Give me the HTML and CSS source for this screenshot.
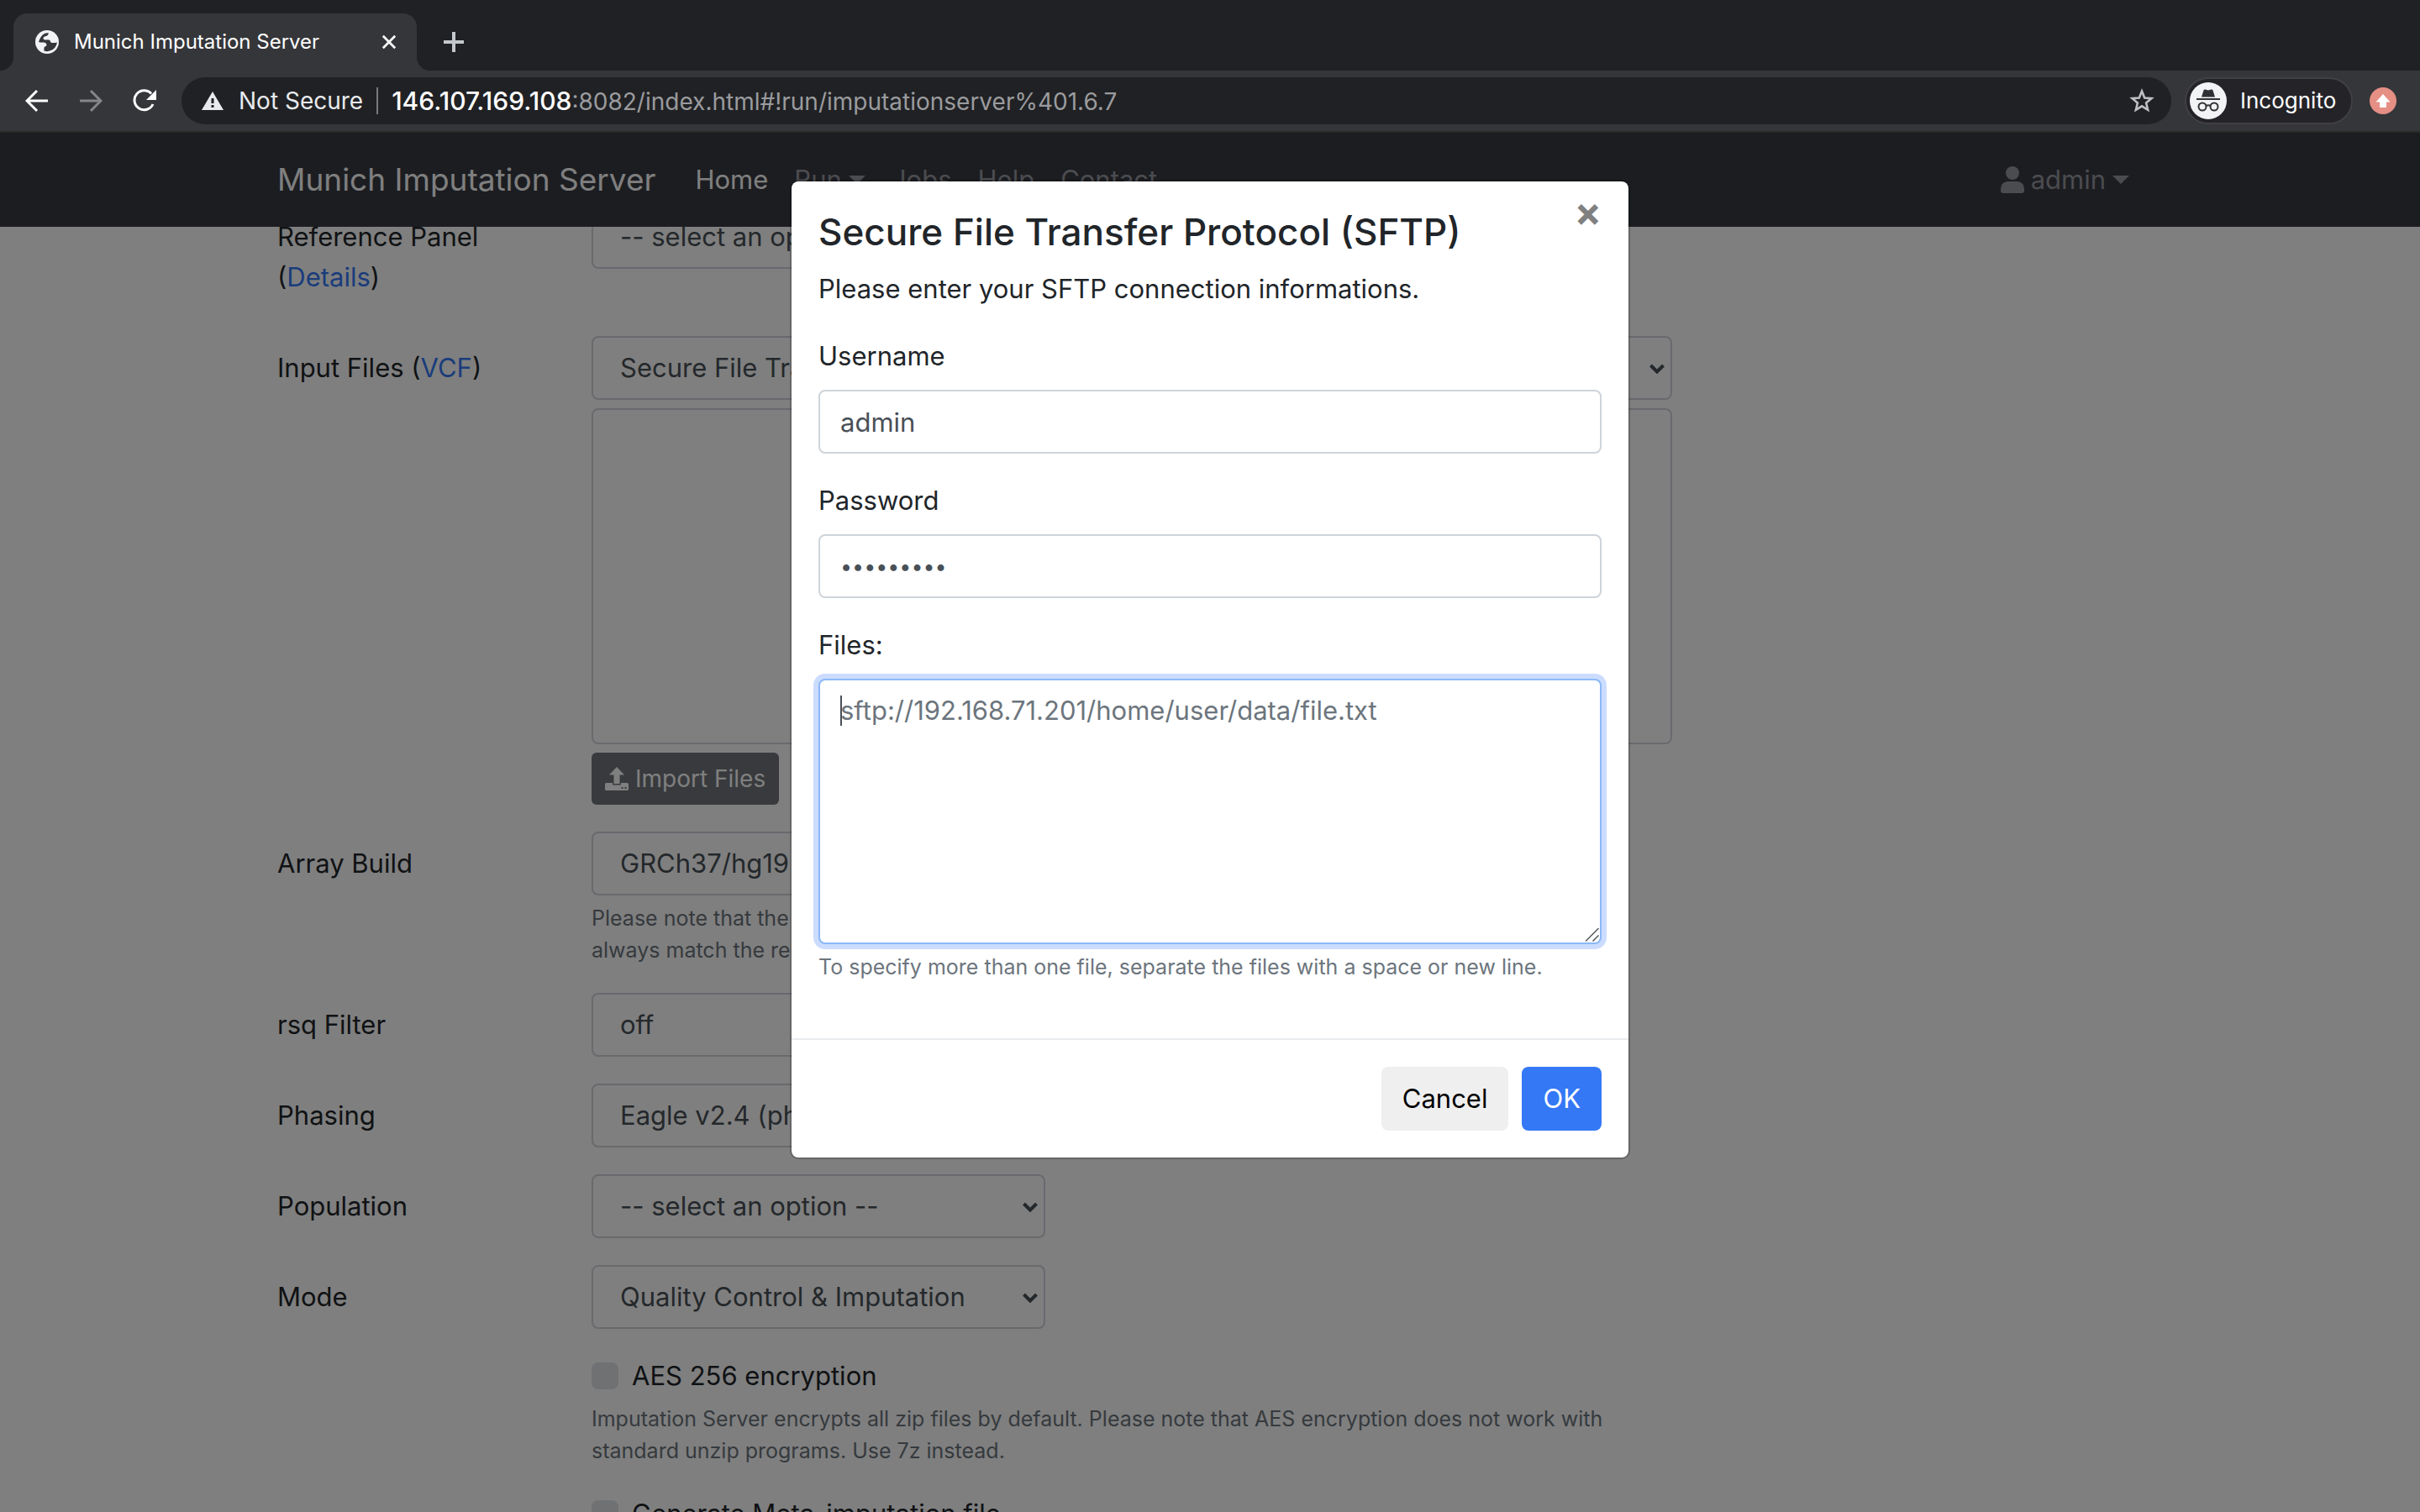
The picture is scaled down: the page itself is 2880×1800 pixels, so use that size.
FILE: index.html
```html
<!DOCTYPE html>
<html lang="en">
<head>
<meta charset="utf-8">
<title>Munich Imputation Server</title>
<link rel="stylesheet" href="styles.css">
</head>
<body>
<header class="browser">
  <div class="tabs">
    <div class="tab">
      <svg class="tab-icon" viewBox="0 0 28 28"><circle cx="14" cy="14" r="14" fill="#f1f3f4"/><path d="M16 3.500c-5-1-9 2-12 10.500 1 .5 3 .5 6 .5q3 0 3.500 3 0 1.500-2 2-1.500.5-1 5 4 1.500 8-.5 6-2 7.500-9.500-3 .5-6 .5-2 0-2.500-3-2-1-4.500-.5-3.500 0-3.500-2 .5-2.500 3.500-2.500 2-.5 3-3.500z" fill="#35363a"/></svg>
      <span class="tab-title">Munich Imputation Server</span>
      <button class="bare tab-close" aria-label="Close tab"><svg width="18" height="18" viewBox="0 0 20 20"><path d="M2 2l16 16M18 2L2 18" stroke="#fff" stroke-width="3"/></svg></button>
    </div>
    <button class="bare tab-new" aria-label="New tab"><svg width="24" height="24" viewBox="0 0 24 24"><path d="M12 0v24M0 12h24" stroke="#c4c7cb" stroke-width="4"/></svg></button>
  </div>
  <div class="toolbar">
    <div class="tools">
      <button class="bare" aria-label="Back"><svg width="28" height="28" viewBox="0 0 28 28"><path d="M27 14H3M14 2L2 14l12 12" fill="none" stroke="#fff" stroke-width="3"/></svg></button>
      <button class="bare" aria-label="Forward"><svg width="28" height="28" viewBox="0 0 28 28"><path d="M1 14h24M14 2l12 12-12 12" fill="none" stroke="#85868a" stroke-width="3"/></svg></button>
      <button class="bare" aria-label="Reload"><svg width="28" height="28" viewBox="0 0 28 28"><path d="M24 18A11.500 11.500 0 1 1 22 5.500" fill="none" stroke="#fff" stroke-width="3"/><path d="M28 1v12H16z" fill="#fff"/></svg></button>
    </div>
    <div class="address">
      <svg width="26" height="22" viewBox="0 0 26 22"><path d="M13 0l13 22H0z" fill="#e8eaed"/><path d="M13 8v6M13 16v3" stroke="#202124" stroke-width="3"/></svg>
      <span class="insecure">Not Secure</span>
      <span class="url"><b>146.107.169.108</b>:8082/index.html#!run/imputationserver%401.6.7</span>
      <button class="bare" aria-label="Bookmark"><svg width="30" height="30" viewBox="0 0 30 30"><path d="M15 3.500l3.200 8 8.300.6-6.400 5.400 2 8.300L15 21.300l-7.100 4.500 2-8.300-6.400-5.400 8.300-.6z" fill="none" stroke="#bdbfc2" stroke-width="2.600"/></svg></button>
    </div>
    <div class="incognito">
      <svg width="44" height="44" viewBox="0 0 44 44"><circle cx="22" cy="22" r="22" fill="#f1f3f4"/><path d="M14 17.500l2.500-8q.5-1.500 2-1l3.500 1 3.500-1q1.500-.5 2 1l2.500 8zM8 19h28v2H8z" fill="#303134"/><g fill="none" stroke="#303134" stroke-width="2"><circle cx="15" cy="29" r="4.500"/><circle cx="29" cy="29" r="4.500"/><path d="M19.500 28q2.500-1.500 5 0"/></g></svg>
      <span>Incognito</span>
    </div>
    <svg width="32" height="32" viewBox="0 0 32 32"><circle cx="16" cy="16" r="16" fill="#e58f85"/><path d="M16 8l8.500 9.500H20V24h-8v-6.500H7.500z" fill="#fff"/></svg>
  </div>
</header>

<div class="page">
  <nav class="navbar">
    <div class="container nav-row">
      <a class="brand" href="#">Munich Imputation Server</a>
      <a class="nav-link active" href="#">Home</a>
      <a class="nav-link" href="#">Run<i class="caret"></i></a>
      <a class="nav-link" href="#">Jobs</a>
      <a class="nav-link" href="#">Help</a>
      <a class="nav-link" href="#">Contact</a>
      <a class="nav-link user" href="#"><svg width="28" height="32" viewBox="0 0 28 32"><circle cx="14" cy="8" r="8" fill="currentColor"/><path d="M8 18h12q8 1 8 9v2q0 3-3 3H3q-3 0-3-3v-2q0-8 8-9z" fill="currentColor"/></svg>admin<i class="caret"></i></a>
    </div>
  </nav>

  <main class="container form">
    <div class="row">
      <label class="label" for="panel">Reference Panel<br>(<a href="#">Details</a>)</label>
      <div class="field"><div class="select short"><select id="panel"><option>-- select an option --</option></select><svg class="chevron" viewBox="0 0 18 12"><path d="M1.500 2L9 9.500 16.500 2" fill="none" stroke="#495057" stroke-width="4"/></svg></div></div>
    </div>
    <div class="row">
      <label class="label" for="files-source">Input Files (<a href="#">VCF</a>)</label>
      <div class="field">
        <div class="select"><select id="files-source"><option>Secure File Transfer Protocol (SFTP)</option></select><svg class="chevron" viewBox="0 0 18 12"><path d="M1.500 2L9 9.500 16.500 2" fill="none" stroke="#495057" stroke-width="4"/></svg></div>
        <select class="file-list" multiple aria-label="Imported files"></select>
        <button class="import"><svg width="28" height="28" viewBox="0 0 28 28"><path d="M14 0l9 9.500h-5.500V20h-7V9.500H5z" fill="currentColor"/><path d="M1.500 19H9v2.500h10V19h7.500Q28 19 28 20.500v6q0 1.500-1.500 1.500h-25Q0 28 0 26.500v-6Q0 19 1.500 19zM19.500 24v2h2v-2zm4 0v2h2v-2z" fill="currentColor" fill-rule="evenodd"/></svg>Import Files</button>
      </div>
    </div>
    <div class="row">
      <label class="label" for="build">Array Build</label>
      <div class="field">
        <div class="select short"><select id="build"><option>GRCh37/hg19</option></select><svg class="chevron" viewBox="0 0 18 12"><path d="M1.500 2L9 9.500 16.500 2" fill="none" stroke="#495057" stroke-width="4"/></svg></div>
        <p class="help">Please note that the<br>always match the re</p>
      </div>
    </div>
    <div class="row">
      <label class="label" for="rsq">rsq Filter</label>
      <div class="field"><div class="select short"><select id="rsq"><option>off</option></select><svg class="chevron" viewBox="0 0 18 12"><path d="M1.500 2L9 9.500 16.500 2" fill="none" stroke="#495057" stroke-width="4"/></svg></div></div>
    </div>
    <div class="row">
      <label class="label" for="phasing">Phasing</label>
      <div class="field"><div class="select short"><select id="phasing"><option>Eagle v2.4 (phased)</option></select><svg class="chevron" viewBox="0 0 18 12"><path d="M1.500 2L9 9.500 16.500 2" fill="none" stroke="#495057" stroke-width="4"/></svg></div></div>
    </div>
    <div class="row">
      <label class="label" for="population">Population</label>
      <div class="field"><div class="select short"><select id="population"><option>-- select an option --</option></select><svg class="chevron" viewBox="0 0 18 12"><path d="M1.500 2L9 9.500 16.500 2" fill="none" stroke="#495057" stroke-width="4"/></svg></div></div>
    </div>
    <div class="row">
      <label class="label" for="mode">Mode</label>
      <div class="field"><div class="select short"><select id="mode"><option>Quality Control &amp; Imputation</option></select><svg class="chevron" viewBox="0 0 18 12"><path d="M1.500 2L9 9.500 16.500 2" fill="none" stroke="#495057" stroke-width="4"/></svg></div></div>
    </div>
    <div class="row">
      <div class="label"></div>
      <div class="field">
        <label class="check"><input type="checkbox">AES 256 encryption</label>
        <p class="help">Imputation Server encrypts all zip files by default. Please note that AES encryption does not work with<br>standard unzip programs. Use 7z instead.</p>
      </div>
    </div>
    <div class="row">
      <div class="label"></div>
      <div class="field"><label class="check"><input type="checkbox">Generate Meta-imputation file</label></div>
    </div>
  </main>

  <div class="backdrop">
    <div class="modal" role="dialog" aria-labelledby="modal-title">
      <form class="modal-body">
        <button type="button" class="bare modal-close" aria-label="Close">×</button>
        <h4 id="modal-title">Secure File Transfer Protocol (SFTP)</h4>
        <p class="intro">Please enter your SFTP connection informations.</p>
        <div class="group"><label for="username">Username</label><input class="control" id="username" type="text" value="admin"></div>
        <div class="group"><label for="password">Password</label><input class="control" id="password" type="password" value="secret123"></div>
        <div class="group">
          <label for="files">Files:</label>
          <div class="files-box">
            <textarea class="control focused" id="files" placeholder="sftp://192.168.71.201/home/user/data/file.txt"></textarea>
            <i class="text-cursor"></i>
            <svg class="grip" viewBox="0 0 16 16"><path d="M0 15.500L15.500 0M8.500 15.500l7-7" stroke="#55585b" stroke-width="1.500"/></svg>
          </div>
          <p class="help">To specify more than one file, separate the files with a space or new line.</p>
        </div>
      </form>
      <div class="modal-footer"><button class="btn">Cancel</button><button class="btn primary">OK</button></div>
    </div>
  </div>
</div>
</body>
</html>
```
FILE: styles.css
```css
* { box-sizing: border-box; }
body {
  margin: 0;
  height: 100vh;
  display: flex;
  flex-direction: column;
  overflow: hidden;
  font: 31px/48px Inter, "Liberation Sans", sans-serif;
  color: #212529;
}
button, input, select, textarea { font: inherit; }
svg { display: block; flex: none; }
a { color: #3478f6; text-decoration: none; }
h4, p { margin: 0; }
.bare { border: 0; padding: 0; background: none; display: flex; }

/* browser frame */
.browser { background: #202124; color: #fff; border-bottom: 2px solid #282a28; }
.tabs { height: 84px; padding: 16px 16px 0; display: flex; align-items: center; gap: 32px; }
.tab {
  position: relative;
  width: 480px;
  height: 68px;
  padding: 0 24px 0 26px;
  display: flex;
  align-items: center;
  gap: 18px;
  background: #35363a;
  border-radius: 16px 16px 0 0;
  font-size: 24px;
}
.tab::before, .tab::after {
  content: "";
  position: absolute;
  bottom: 0;
  width: 16px;
  height: 16px;
}
.tab::before { right: 100%; background: radial-gradient(circle at 0 0, #202124 16px, #35363a 16px); }
.tab::after { left: 100%; background: radial-gradient(circle at 100% 0, #202124 16px, #35363a 16px); }
.tab-icon { width: 28px; height: 28px; }
.tab-title { flex: 1; white-space: nowrap; }
.toolbar { height: 72px; padding: 8px 28px 8px 30px; display: flex; align-items: center; gap: 16px; background: #35363a; }
.tools { display: flex; gap: 36px; margin-right: 14px; }
.address {
  flex: 1;
  height: 56px;
  padding: 0 20px 0 24px;
  display: flex;
  align-items: center;
  background: #202124;
  border-radius: 28px;
  font-size: 28px;
}
.insecure { margin-left: 18px; padding-right: 16px; border-right: 2px solid #77797c; line-height: 32px; color: #e8eaed; }
.url { flex: 1; margin-left: 16px; color: #9a9b9e; }
.url b { font-size: 30px; font-weight: 500; color: #fff; }
.incognito {
  width: 200px;
  height: 56px;
  margin-right: 4px;
  padding-left: 4px;
  display: flex;
  align-items: center;
  gap: 16px;
  border: 2px solid #414045;
  border-radius: 28px;
  background: #242328;
  font-size: 26px;
}

/* page */
.page { position: relative; flex: 1; overflow: hidden; background: #fff; }
.container { max-width: 2280px; margin: 0 auto; padding: 0 30px; }
.navbar { position: relative; z-index: 1; background: #383a42; }
.nav-row { height: 112px; display: flex; align-items: center; gap: 31px; }
.brand { margin-right: 16px; font-size: 37px; color: #fff; }
.nav-link { display: flex; align-items: center; color: #9698a0; }
.nav-link.active { color: #fff; }
.user { margin: 0 16px 0 auto; gap: 8px; }
.caret { margin-left: 8px; border: solid transparent; border-width: 10px 10px 0; border-top-color: currentColor; }
.user .caret { margin-left: 0; }

.form { margin-top: -26px; }
.row { display: flex; margin-bottom: 32px; }
.label { width: 374px; flex: none; padding: 14px 0; }
.field { width: 1286px; }
.select { position: relative; }
.select.short { width: 540px; }
.select select {
  display: block;
  width: 100%;
  height: 76px;
  padding: 0 32px;
  appearance: none;
  border: 2px solid #d2d2dc;
  border-radius: 8px;
  background: #fff;
  color: #495057;
}
.chevron { position: absolute; right: 9px; top: 33px; width: 18px; height: 12px; }
.file-list { display: block; width: 100%; height: 400px; margin: 10px 0; border: 2px solid #d2d2dc; border-radius: 8px; background: #fff; }
.import {
  height: 62px;
  padding: 0 16px;
  display: flex;
  align-items: center;
  gap: 8px;
  border: 0;
  border-radius: 6px;
  background: #70757a;
  color: #fff;
  font-size: 28px;
}
.help { margin-top: 8px; font-size: 25px; line-height: 38px; color: #6c757d; white-space: nowrap; }
.check { display: flex; align-items: center; gap: 16px; }
.check input { appearance: none; width: 32px; height: 32px; margin: 0; border-radius: 8px; background: #dee2e6; }

/* dialog */
.backdrop { position: absolute; inset: 0; z-index: 2; padding: 56px 0; background: rgba(0, 0, 0, .5); }
.modal {
  position: relative;
  width: 1000px;
  margin: 0 auto;
  border: 2px solid rgba(0, 0, 0, .2);
  border-radius: 10px;
  background: #fff;
  background-clip: padding-box;
}
.modal-body { padding: 32px 32px 34px; }
.modal-close { position: absolute; top: 12px; right: 32px; font-size: 48px; font-weight: 700; color: #808080; }
h4 { margin-bottom: 16px; font-size: 44px; line-height: 56px; font-weight: 500; }
.group { margin-top: 32px; }
.group label { display: block; margin-bottom: 16px; }
.group:last-child { margin-bottom: 32px; }
.control {
  display: block;
  width: 100%;
  height: 76px;
  padding: 12px 24px;
  border: 2px solid #ced4da;
  border-radius: 8px;
  background: #fff;
  color: #495057;
  outline: none;
}
.control[type="password"] { font-size: 25px; }
.files-box { position: relative; }
.focused { height: 316px; resize: none; border-color: #8cb8f8; box-shadow: 0 0 0 6px #cbdcff; }
.focused::placeholder { color: #6c757d; }
.text-cursor { position: absolute; left: 26px; top: 20px; width: 2px; height: 36px; background: #495057; }
.grip { position: absolute; right: 3px; bottom: 3px; width: 16px; height: 16px; }
.modal-footer { display: flex; justify-content: flex-end; gap: 16px; padding: 32px; border-top: 2px solid #e9ecef; }
.btn { height: 76px; padding: 0 25px; border: 0; border-radius: 8px; background: #efefef; color: #000; }
.primary { background: #3478f6; color: #fff; }
```
